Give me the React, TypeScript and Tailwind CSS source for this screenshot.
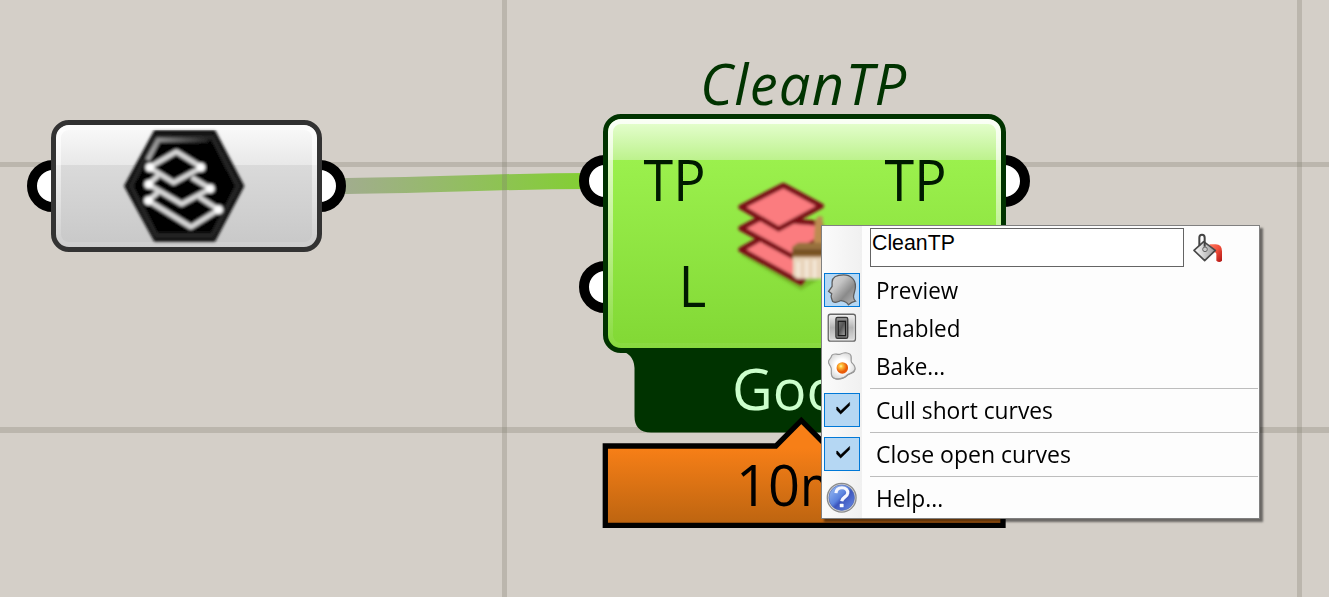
import type { ReactNode } from "react";

const GRID = "absolute bg-[#807e70]/30";
const LABEL = "block whitespace-nowrap font-['Open_Sans',sans-serif] text-[56px]";

function Grip({ className }: { className: string }) {
  return <div className={`absolute size-[52px] rounded-full border-[10px] border-black bg-white ${className}`} />;
}

function LayersBadge() {
  return (
    <svg viewBox="0 0 420 390" className="mt-[-5px] h-[130px] w-[140px] shrink-0">
      <defs>
        <filter id="soft"><feGaussianBlur stdDeviation="4" /></filter>
        <linearGradient id="rim" x1="0" x2="1">
          <stop offset="0" stopColor="#aaa" />
          <stop offset="1" stopColor="#222" />
        </linearGradient>
      </defs>
      <g filter="url(#soft)">
        <path d="M118 30H300L388 198L300 365H118L27 198Z" fill="#111" />
        <path d="M124 52H292L368 198L292 346H124L48 198Z" fill="#030303" stroke="#262626" strokeWidth="12" />
        <path d="M98 120L130 60H280" fill="none" stroke="url(#rim)" strokeWidth="14" />
        <g fill="none" stroke="#d6d6d6" strokeWidth="15" strokeLinejoin="round">
          <path d="M103 142L184 95L260 142L176 188L103 142" />
          <path d="M130 166L100 193M130 166L200 206M220 168L286 206L200 252L100 193" strokeOpacity="0" />
          <path d="M130 166L100 193L200 252L286 206L230 172" />
          <path d="M130 216L100 242L228 321L311 269L252 231" />
        </g>
        <g fill="#fff">
          <circle cx="104" cy="142" r="13" /><circle cx="258" cy="142" r="13" />
          <circle cx="101" cy="193" r="13" /><circle cx="286" cy="206" r="13" />
          <circle cx="100" cy="242" r="13" /><circle cx="311" cy="269" r="13" />
        </g>
      </g>
    </svg>
  );
}

function CleanLayers() {
  return (
    <svg viewBox="0 0 330 390" className="ml-[14px] mt-[51px] h-[130px] w-[110px] shrink-0">
      <g filter="url(#soft)">
        <g opacity="0.3" transform="translate(3 6)" stroke="#456b12" strokeWidth="22" fill="none">
          <path d="M65 240L240 342L310 300" />
        </g>
        <g fill="#fb7c7f" stroke="#7b1014" strokeWidth="16" strokeLinejoin="round">
          <path d="M63 239L120 207L300 250L242 338Z" />
          <path d="M63 175L120 145L300 160L310 200L215 258Z" />
          <path d="M63 111L190 46L304 108L176 177Z" />
        </g>
        <path d="M286 150L296 138L308 140V230H280Z" fill="#bd8b51" />
        <path d="M217 230L235 218H320V270H217Z" fill="#98713e" />
        <path d="M217 238H320V255H217Z" fill="#765124" />
        <path d="M219 262H320V326H230L219 316Z" fill="#e8d4bb" />
        <path d="M235 275V320M260 270V325M284 270V325" stroke="#f4e8d8" strokeWidth="10" />
      </g>
    </svg>
  );
}

function PreviewIcon() {
  return (
    <svg viewBox="28 160 106 100" className="h-full w-full">
      <defs>
        <linearGradient id="head" x1="0" y1="0" x2="1" y2="1">
          <stop offset="0" stopColor="#ddd" /><stop offset=".35" stopColor="#c4c4c4" /><stop offset=".65" stopColor="#8a8a8a" /><stop offset="1" stopColor="#bbb" />
        </linearGradient>
      </defs>
      <path d="M50 185C51 168 68 163 86 163C109 163 123 178 123 198C123 214 117 220 117 231C117 239 120 242 123 245C112 247 107 251 101 256C95 246 88 244 78 243C69 248 60 251 52 246C50 240 47 236 47 229L49 222L39 214L50 199Z" fill="url(#head)" stroke="#5c5c5c" strokeWidth="4" />
    </svg>
  );
}

function EnabledIcon() {
  return (
    <svg viewBox="28 274 106 100" className="h-full w-full">
      <defs>
        <linearGradient id="plate" x1="0" y1="0" x2="0" y2="1"><stop stopColor="#f3f3f3" /><stop offset=".5" stopColor="#b4b4b4" /><stop offset="1" stopColor="#ddd" /></linearGradient>
        <linearGradient id="rocker" x1="0" y1="0" x2="1" y2="1"><stop stopColor="#777" /><stop offset=".45" stopColor="#555" /><stop offset="1" stopColor="#aaa" /></linearGradient>
      </defs>
      <rect x="38" y="281" width="85" height="84" rx="7" fill="url(#plate)" stroke="#666" strokeWidth="4" />
      <rect x="42" y="285" width="77" height="76" rx="4" fill="none" stroke="#eee" strokeWidth="2" />
      <rect x="62" y="291" width="37" height="65" rx="5" fill="#8a8a8a" stroke="#333" strokeWidth="4" />
      <rect x="69" y="303" width="23" height="45" fill="url(#rocker)" stroke="#1a1a1a" strokeWidth="4" />
    </svg>
  );
}

function BakeIcon() {
  const egg = "M49 405C56 395 66 404 75 401C87 395 96 394 106 401C114 407 106 419 111 427C118 434 125 440 121 450C116 461 105 459 96 467C86 477 65 482 53 474C43 467 50 455 47 444C44 434 37 431 39 423C41 415 46 416 49 405Z";
  return (
    <svg viewBox="28 388 106 100" className="h-full w-full">
      <defs>
        <radialGradient id="white"><stop offset=".5" stopColor="#fff" /><stop offset="1" stopColor="#ddd" /></radialGradient>
        <radialGradient id="yolk" cx=".38" cy=".35"><stop stopColor="#fff7b0" /><stop offset=".3" stopColor="#ffc13c" /><stop offset="1" stopColor="#e95a08" /></radialGradient>
      </defs>
      <path d={egg} transform="translate(1 3)" fill="#444" opacity=".6" />
      <path d={egg} fill="url(#white)" stroke="#999" strokeWidth="3.5" />
      <circle cx="82" cy="444" r="18" fill="url(#yolk)" />
    </svg>
  );
}

function CheckIcon() {
  return (
    <svg viewBox="28 40 106 100" className="h-full w-full">
      <path d="M64 81V90L77 103L105 76V66L77 92L67 81Z" fill="#000" stroke="#000" />
    </svg>
  );
}

function HelpIcon() {
  return (
    <svg viewBox="28 304 106 100" className="h-full w-full">
      <defs>
        <linearGradient id="ball" x1="0" y1="0" x2="1" y2="1"><stop stopColor="#9fc2f5" /><stop offset=".45" stopColor="#5b83df" /><stop offset=".55" stopColor="#3d56bd" /><stop offset="1" stopColor="#6b8eea" /></linearGradient>
      </defs>
      <circle cx="80" cy="353" r="45" fill="#dcdcdc" stroke="#8b8b8b" strokeWidth="4" />
      <circle cx="80" cy="353" r="40" fill="url(#ball)" stroke="#5068ae" strokeWidth="2" />
      <path d="M62 339C63 326 71 322 81 322C93 322 100 329 99 339C98 350 82 351 80 364" fill="none" stroke="#f4f6ff" strokeWidth="10" />
      <rect x="74" y="372" width="12" height="11" rx="2" fill="#fff" />
    </svg>
  );
}

function BucketIcon() {
  return (
    <svg viewBox="996 33 96 96" className="ml-2 mt-[3px] size-8">
      <defs>
        <linearGradient id="paint" x1="0" y1="0" x2="1" y2="1"><stop stopColor="#ff7961" /><stop offset=".5" stopColor="#f04c38" /><stop offset="1" stopColor="#ad1414" /></linearGradient>
        <linearGradient id="pail" x1="0" y1="0" x2="1" y2="0"><stop stopColor="#fff" /><stop offset="1" stopColor="#999" /></linearGradient>
      </defs>
      <path d="M1048 73H1067Q1086 73 1086 94V122Q1078 130 1069 122V103Q1069 96 1059 96Z" fill="url(#paint)" />
      <path d="M1002 91L1031 65L1066 91L1034 122Z" fill="url(#pail)" stroke="#484848" strokeWidth="5" strokeLinejoin="round" />
      <path d="M1018 77V53Q1018 44 1026 44Q1034 44 1034 53V80" fill="none" stroke="#444" strokeWidth="6" />
      <circle cx="1035" cy="88" r="7" fill="#ccc" stroke="#666" strokeWidth="3" />
    </svg>
  );
}

function MenuRow({ icon, label, stretch, boxed }: { icon: ReactNode; label: string; stretch: string; boxed?: boolean }) {
  return (
    <div className="flex h-[38px] items-start">
      <div className={`ml-[2px] mt-px h-[34px] w-9 shrink-0 border ${boxed ? "border-[#0078d7] bg-[#b5d7f3]" : "border-transparent"}`}>{icon}</div>
      <span className={`ml-4 origin-left whitespace-nowrap text-[23.5px] leading-[36px] ${stretch}`}>{label}</span>
    </div>
  );
}

function Separator() {
  return <div className="ml-12 mr-px h-1.5 pt-0.5"><div className="h-px bg-[#bdbdbd]" /></div>;
}

function ContextMenu() {
  return (
    <div className="absolute left-[821px] top-[225px] h-[294px] w-[439px] border border-[#808080] bg-[linear-gradient(90deg,#fbfbfb_0,#f0f0f0_40px,#fdfdfd_40px)] font-['Open_Sans',sans-serif] text-black shadow-[3px_3px_2px_rgba(0,0,0,0.5)]">
      <div className="flex h-[46px] items-start pl-12 pt-[2px]">
        <div className="h-[39px] w-[314px] border border-[#646464] bg-white pl-px font-['Liberation_Sans',sans-serif] text-[21.3px] leading-[28px]">CleanTP</div>
        <BucketIcon />
      </div>
      <MenuRow icon={<PreviewIcon />} label="Preview" stretch="scale-x-[0.955]" boxed />
      <MenuRow icon={<EnabledIcon />} label="Enabled" stretch="scale-x-[0.955]" />
      <MenuRow icon={<BakeIcon />} label="Bake..." stretch="scale-x-[0.955]" />
      <Separator />
      <MenuRow icon={<CheckIcon />} label="Cull short curves" stretch="scale-x-[0.97]" boxed />
      <Separator />
      <MenuRow icon={<CheckIcon />} label="Close open curves" stretch="scale-x-[0.98]" boxed />
      <Separator />
      <MenuRow icon={<HelpIcon />} label="Help..." stretch="scale-x-[0.97]" />
    </div>
  );
}

function ParameterNode() {
  return (
    <div className="absolute left-[51px] top-[120px] h-[132px] w-[271px]">
      <Grip className="left-[-24px] top-[40px]" />
      <Grip className="right-[-24px] top-[40px]" />
      <div className="relative flex h-full rounded-[18px] border-[5px] border-[#333] bg-[linear-gradient(180deg,#fafafa_0,#e8e8e8_40px,#dadada_40px,#c8c8c8_100%)] pl-[59px]">
        <div className="absolute inset-0 rounded-[13px] border-[5px] border-white/70 [mask-image:linear-gradient(#000,rgba(0,0,0,.15))]" />
        <LayersBadge />
      </div>
    </div>
  );
}

function CleanNode() {
  return (
    <div className="absolute left-[603px] top-[46px] flex w-[403px] flex-col">
      <span className={`${LABEL} h-[68px] pl-[97px] italic leading-[74px] tracking-[1.3px] text-[#003300]`}>CleanTP</span>
      <div className="relative h-[239px]">
        <Grip className="left-[-24px] top-[41px]" />
        <Grip className="left-[-24px] top-[147px]" />
        <Grip className="right-[-24px] top-[41px]" />
        <div className="relative flex h-full rounded-[18px] border-[5px] border-[#003300] bg-[linear-gradient(180deg,#e8ffd4_0,#bdf28d_41px,#9bf04d_41px,#82d835_100%)] pl-[36px] pr-[54px] leading-[76px] text-[#001a00]">
          <div className="absolute inset-0 rounded-[13px] border-[5px] border-white/80 [mask-image:linear-gradient(#000,rgba(0,0,0,.06))]" />
          <div className="flex w-[62px] flex-col items-end gap-[30px] pt-[22px]">
            <span className={`${LABEL} origin-right scale-x-[0.96]`}>TP</span>
            <span className={`${LABEL} origin-right scale-x-[0.94]`}>L</span>
          </div>
          <CleanLayers />
          <span className={`${LABEL} ml-auto origin-right scale-x-[0.96] pt-[22px]`}>TP</span>
        </div>
      </div>
      <span className={`${LABEL} relative h-[80px] pl-[129px] leading-[71px] text-[#ccffcc]`}>Good</span>
      <span className={`${LABEL} relative pl-[133px] leading-[102px] text-black`}>10<span className="inline-block origin-left scale-x-[0.9]">ms</span></span>
    </div>
  );
}

export default function App() {
  return (
    <main className="relative h-[597px] w-[1329px] overflow-hidden bg-[#d4cfc8]">
      <svg className="absolute inset-0 h-full w-full" viewBox="0 0 1329 597">
        <defs>
          <linearGradient id="wire" gradientUnits="userSpaceOnUse" x1="340" y1="0" x2="585" y2="0">
            <stop stopColor="#a2ac90" /><stop offset="1" stopColor="#83cf33" />
          </linearGradient>
        </defs>
        <path d="M335 186C430 186 490 181 590 181" fill="none" stroke="url(#wire)" strokeWidth="16" />
      </svg>

      <div className={`${GRID} left-0 top-[162px] h-[5px] w-full`} />
      <div className={`${GRID} left-0 top-[427px] h-[6px] w-full`} />
      <div className={`${GRID} left-[502px] top-0 h-full w-[5px]`} />
      <div className={`${GRID} left-[1297px] top-0 h-full w-[5px]`} />

      <svg className="absolute inset-0 h-full w-full" viewBox="0 0 1329 597">
        <defs>
          <linearGradient id="orange" gradientUnits="userSpaceOnUse" x1="0" y1="448" x2="0" y2="525">
            <stop stopColor="#f77f17" /><stop offset="1" stopColor="#bc6410" />
          </linearGradient>
        </defs>
        <path d="M618 350Q634 353 634.5 368V416Q634.5 432.5 651 432.5H958Q974 432.5 974 416V368Q974 353 990 350Z" fill="#003300" />
        <path d="M605.3 446H775.8L801.3 420.5L826.8 446H1003V525.3H605.3Z" fill="url(#orange)" stroke="#000" strokeWidth="5.3" />
      </svg>

      <ParameterNode />
      <CleanNode />
      <ContextMenu />
    </main>
  );
}
